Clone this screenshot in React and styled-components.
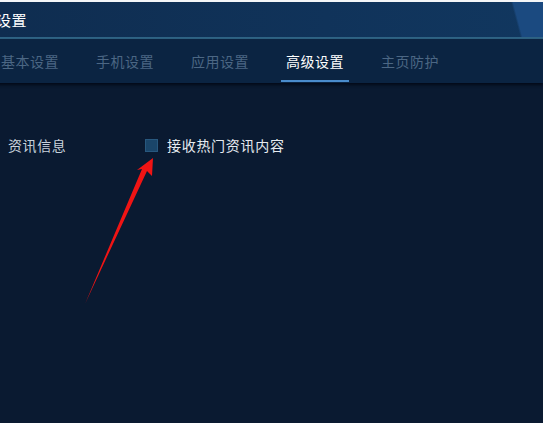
import React from "react";
import styled, { createGlobalStyle } from "styled-components";

const GlobalStyle = createGlobalStyle`
  html, body {
    margin: 0;
    padding: 0;
    background: #0a1a31;
  }
  body {
    font-family: "Noto Sans CJK SC", "Noto Sans", sans-serif;
  }
`;

const Window = styled.div`
  position: relative;
  width: 543px;
  height: 423px;
  overflow: hidden;
  background: #0a1a31;
  border-top: 2px solid #f4f6f8;
  box-sizing: border-box;
`;

const TitleBar = styled.div`
  height: 35px;
  display: flex;
  align-items: center;
  background:
    linear-gradient(75deg, transparent 0 94.2%, #1b4a80 94.6% 100%),
    linear-gradient(90deg, #0f2d50 0%, #10335a 60%, #11375f 100%);
  border-bottom: 2px solid #2f6486;
`;

const Title = styled.span`
  margin-left: -4px;
  color: #ffffff;
  font-size: 15px;
  letter-spacing: 0.5px;
`;

const TabBar = styled.div`
  height: 44px;
  display: flex;
  align-items: stretch;
  gap: 29px;
  margin-left: -3px;
  background: #0b2442;
  box-shadow: 0 2px 3px rgba(2, 8, 20, 0.9);
`;

const Tab = styled.div`
  position: relative;
  display: flex;
  align-items: center;
  padding: 0 4px;
  font-size: 14px;
  letter-spacing: 0.5px;
  color: ${(p) => (p.active ? "#ffffff" : "#4c6784")};
  &::after {
    content: "";
    position: absolute;
    left: -1px;
    right: -1px;
    bottom: 1px;
    height: 2px;
    background: ${(p) => (p.active ? "#4a8ccc" : "transparent")};
  }
`;

const Body = styled.div`
  padding: 52px 0 0 8px;
`;

const Row = styled.div`
  display: flex;
  align-items: center;
  height: 20px;
`;

const Label = styled.span`
  width: 137px;
  font-size: 14px;
  letter-spacing: 0.6px;
  color: #c9d2dc;
`;

const Check = styled.span`
  width: 13px;
  height: 13px;
  box-sizing: border-box;
  background: #1a4569;
  border: 1px solid #28587e;
  margin-right: 9px;
`;

const CheckText = styled.span`
  font-size: 14px;
  letter-spacing: 0.7px;
  color: #e6ebf0;
`;

const Arrow = styled.svg`
  position: absolute;
  left: 0;
  top: 0;
  pointer-events: none;
`;

const tabs = ["基本设置", "手机设置", "应用设置", "高级设置", "主页防护"];

export default function App() {
  return (
    <>
      <GlobalStyle />
      <Window>
        <TitleBar>
          <Title>设置</Title>
        </TitleBar>
        <TabBar>
          {tabs.map((t) => (
            <Tab key={t} active={t === "高级设置"}>
              {t}
            </Tab>
          ))}
        </TabBar>
        <Body>
          <Row>
            <Label>资讯信息</Label>
            <Check />
            <CheckText>接收热门资讯内容</CheckText>
          </Row>
        </Body>
        <Arrow width="543" height="423" viewBox="0 0 543 423">
          <polygon
            points="153,156 152,174 147,169 85,302 142,167 137,168"
            fill="#f01414"
          />
        </Arrow>
      </Window>
    </>
  );
}
